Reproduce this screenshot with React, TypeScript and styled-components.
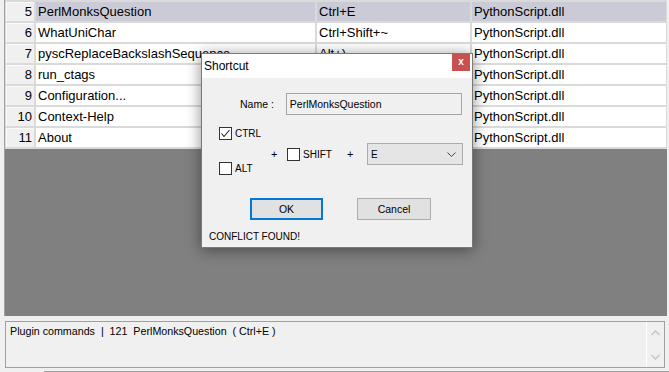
import React from "react";
import styled, { createGlobalStyle } from "styled-components";

const GlobalStyle = createGlobalStyle`
  html, body { margin: 0; padding: 0; background: #f0f0f0; overflow: hidden; }
  #root { width: 669px; height: 372px; }
`;

const Screen = styled.div`
  position: relative;
  width: 669px;
  height: 372px;
  background: #f0f0f0;
  font-family: "Liberation Sans", Arial, sans-serif;
  color: #000;
`;

const GridWindow = styled.div`
  margin-left: 4px;
  width: 662px;
  height: 316px;
  border-left: 1px solid #a0a0a0;
  background: #808080;
`;

const Table = styled.div`
  display: grid;
  grid-template-columns: 28px 279px 153px 194px;
  grid-auto-rows: 19px;
  gap: 2px;
  padding: 2px 1px 2px 1px;
  background: #dadada;
  width: fit-content;
`;

const Cell = styled.div<{ $selected?: boolean }>`
  background: ${(p) => (p.$selected ? "#cacbd6" : "#ffffff")};
  font-size: 13px;
  line-height: 19px;
  padding-left: 2px;
  white-space: nowrap;
  overflow: hidden;
`;

const HeaderCell = styled.div`
  background: #f0f0f0;
  font-size: 13px;
  line-height: 19px;
  text-align: right;
  padding-right: 2px;
  box-shadow: inset 1px 1px 0 #fafafa;
`;

const BottomPanel = styled.div`
  margin: 5px 0 0 5px;
  width: 658px;
  height: 45px;
  border: 1px solid #a0a0a0;
  display: flex;
  background: #f0f0f0;
`;

const StatusText = styled.div`
  flex: 1;
  padding: 3px 0 0 4px;
  font-size: 10.7px;
  line-height: 13px;
  white-space: pre;
`;

const ScrollBar = styled.div`
  width: 17px;
  border-left: 1px solid #ffffff;
  display: flex;
  flex-direction: column;
  justify-content: space-between;
  align-items: center;
  padding: 8px 0 7px;
`;

const BottomRule = styled.div`
  margin: 3px 0 0 44px;
  height: 1px;
  background: #a0a0a0;
`;

const Dialog = styled.div`
  position: absolute;
  left: 201px;
  top: 53px;
  width: 270px;
  height: 193px;
  border: 1px solid #7a7a7a;
  background: #f0f0f0;
  box-shadow: 0 2px 14px rgba(0, 0, 0, 0.45);
  display: flex;
  flex-direction: column;
`;

const TitleBar = styled.div`
  height: 24px;
  background: #ffffff;
  display: flex;
  align-items: center;
  padding-left: 2px;
`;

const Title = styled.div`
  flex: 1;
  font-size: 12px;
`;

const CloseButton = styled.div`
  align-self: flex-start;
  width: 18px;
  height: 17px;
  margin-right: 2px;
  background: #c75050;
  color: #fff;
  font-weight: bold;
  font-size: 10px;
  line-height: 16px;
  text-align: center;
`;

const Body = styled.div`
  display: flex;
  flex-direction: column;
  font-size: 10px;
`;

const NameRow = styled.div`
  display: flex;
  align-items: center;
  margin: 15px 0 0 38px;
  gap: 12px;
  font-size: 10.5px;
`;

const TextBox = styled.div`
  width: 171px;
  height: 20px;
  border: 1px solid #a5a5a5;
  background: #f0f0f0;
  padding-left: 3px;
  line-height: 20px;
  box-sizing: content-box;
`;

const ModArea = styled.div`
  display: flex;
  align-items: flex-start;
  margin: 12px 0 0 17px;
`;

const ModColumn = styled.div`
  width: 52px;
  display: flex;
  flex-direction: column;
  gap: 22px;
`;

const Check = styled.label`
  display: flex;
  align-items: center;
  gap: 3px;
  height: 13px;
  line-height: 13px;
`;

const Box = styled.span`
  width: 11px;
  height: 11px;
  border: 1px solid #333;
  background: #fff;
  display: flex;
  align-items: center;
  justify-content: center;
`;

const KeyRow = styled.div`
  display: flex;
  align-items: center;
  margin-top: 16px;
  height: 22px;
`;

const Plus = styled.span<{ $w: number; $ml?: number }>`
  width: ${(p) => p.$w}px;
  margin-left: ${(p) => p.$ml ?? 0}px;
  font-size: 11px;
`;

const Combo = styled.div`
  height: 20px;
  width: 85px;
  border: 1px solid #acacac;
  background: #e5e5e5;
  display: flex;
  align-items: center;
  justify-content: space-between;
  padding: 0 6px 0 3px;
  box-sizing: content-box;
`;

const ButtonRow = styled.div`
  display: flex;
  gap: 34px;
  margin: 23px 0 0 48px;
`;

const Button = styled.div<{ $default?: boolean; $w: number }>`
  width: ${(p) => p.$w}px;
  height: 22px;
  box-sizing: border-box;
  background: #e1e1e1;
  border: ${(p) => (p.$default ? "2px solid #0078d7" : "1px solid #adadad")};
  display: flex;
  align-items: center;
  justify-content: center;
  font-size: 10.5px;
`;

const Conflict = styled.div`
  margin: 11px 0 0 7px;
  line-height: 12px;
`;

const rows = [
  { n: 5, name: "PerlMonksQuestion", key: "Ctrl+E", sel: true },
  { n: 6, name: "WhatUniChar", key: "Ctrl+Shift+~" },
  { n: 7, name: "pyscReplaceBackslashSequence", key: "Alt+)" },
  { n: 8, name: "run_ctags", key: "" },
  { n: 9, name: "Configuration...", key: "" },
  { n: 10, name: "Context-Help", key: "" },
  { n: 11, name: "About", key: "" },
];

const Chevron = ({ up }: { up?: boolean }) => (
  <svg width="9" height="6" viewBox="0 0 9 6">
    <polyline
      points={up ? "0.5,5 4.5,1 8.5,5" : "0.5,1 4.5,5 8.5,1"}
      fill="none"
      stroke={"#c4c4c4"}
      strokeWidth="1.4"
    />
  </svg>
);

const CheckMark = () => (
  <svg width="11" height="11" viewBox="0 0 11 11">
    <polyline points="1.5,5.5 4,8.5 9.5,2" fill="none" stroke="#222" strokeWidth="1.1" />
  </svg>
);

export default function App() {
  return (
    <>
      <GlobalStyle />
      <Screen>
        <GridWindow>
          <Table>
            {rows.map((r) => (
              <React.Fragment key={r.n}>
                <HeaderCell>{r.n}</HeaderCell>
                <Cell $selected={r.sel}>{r.name}</Cell>
                <Cell $selected={r.sel}>{r.key}</Cell>
                <Cell $selected={r.sel}>PythonScript.dll</Cell>
              </React.Fragment>
            ))}
          </Table>
        </GridWindow>
        <BottomPanel>
          <StatusText>{"Plugin commands  |  121  PerlMonksQuestion  ( Ctrl+E )"}</StatusText>
          <ScrollBar>
            <Chevron up />
            <Chevron />
          </ScrollBar>
        </BottomPanel>
        <BottomRule />

        <Dialog>
          <TitleBar>
            <Title>Shortcut</Title>
            <CloseButton>x</CloseButton>
          </TitleBar>
          <Body>
            <NameRow>
              <span>Name :</span>
              <TextBox>PerlMonksQuestion</TextBox>
            </NameRow>
            <ModArea>
              <ModColumn>
                <Check>
                  <Box>
                    <CheckMark />
                  </Box>
                  CTRL
                </Check>
                <Check>
                  <Box />
                  ALT
                </Check>
              </ModColumn>
              <KeyRow>
                <Plus $w={16}>+</Plus>
                <Check>
                  <Box />
                  SHIFT
                </Check>
                <Plus $w={20} $ml={15}>+</Plus>
                <Combo>
                  <span>E</span>
                  <svg width="9" height="5" viewBox="0 0 9 5">
                    <polyline points="0.5,0.5 4.5,4.5 8.5,0.5" fill="none" stroke="#444" strokeWidth="1" />
                  </svg>
                </Combo>
              </KeyRow>
            </ModArea>
            <ButtonRow>
              <Button $default $w={73}>OK</Button>
              <Button $w={74}>Cancel</Button>
            </ButtonRow>
            <Conflict>CONFLICT FOUND!</Conflict>
          </Body>
        </Dialog>
      </Screen>
    </>
  );
}
